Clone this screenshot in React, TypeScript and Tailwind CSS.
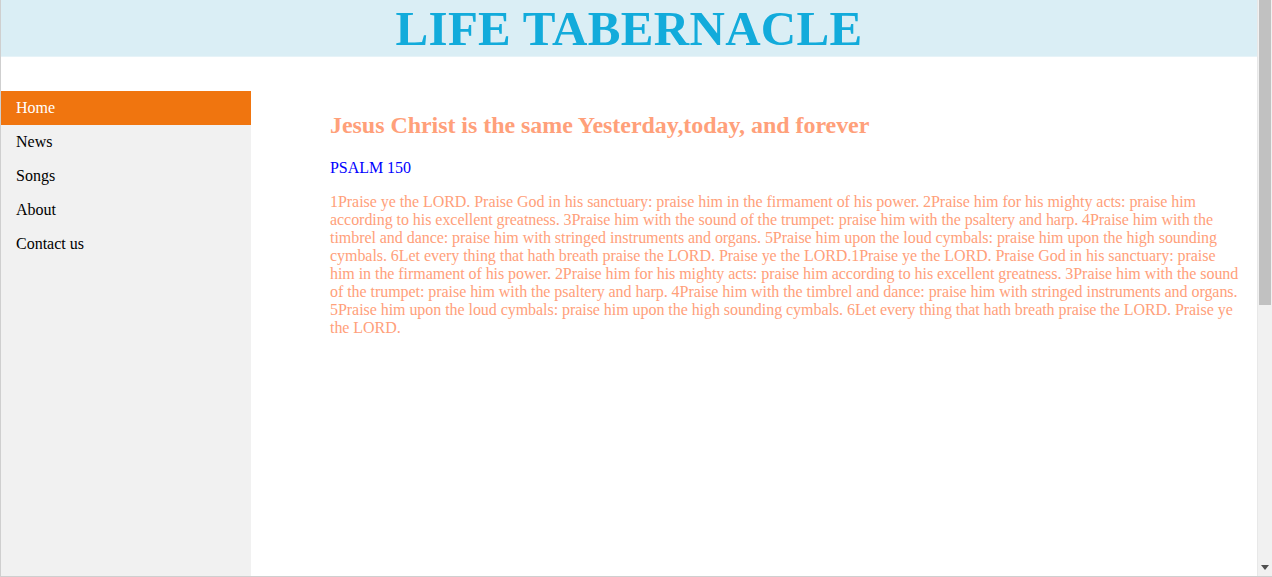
import React from 'react';

const navItems = ['Home', 'News', 'Songs', 'About', 'Contact us'];

const psalm =
  '1Praise ye the LORD. Praise God in his sanctuary: praise him in the firmament of his power. 2Praise him for his mighty acts: praise him according to his excellent greatness. 3Praise him with the sound of the trumpet: praise him with the psaltery and harp. 4Praise him with the timbrel and dance: praise him with stringed instruments and organs. 5Praise him upon the loud cymbals: praise him upon the high sounding cymbals. 6Let every thing that hath breath praise the LORD. Praise ye the LORD.1Praise ye the LORD. Praise God in his sanctuary: praise him in the firmament of his power. 2Praise him for his mighty acts: praise him according to his excellent greatness. 3Praise him with the sound of the trumpet: praise him with the psaltery and harp. 4Praise him with the timbrel and dance: praise him with stringed instruments and organs. 5Praise him upon the loud cymbals: praise him upon the high sounding cymbals. 6Let every thing that hath breath praise the LORD. Praise ye the LORD.';

const Sidebar: React.FC = () => (
  <ul className="w-[250px] shrink-0 bg-[#f1f1f1] h-full">
    {navItems.map((item, i) => (
      <li key={item}>
        <a
          href="#"
          className={`block pl-[15px] pr-4 py-2 text-base leading-[normal] ${
            i === 0 ? 'bg-[#f0750f] text-white' : 'text-black'
          }`}
        >
          {item}
        </a>
      </li>
    ))}
  </ul>
);

const App: React.FC = () => {
  return (
    <div
      className="h-[577px] w-[1272px] overflow-hidden flex bg-white border-l border-b border-[#cfcfcf]"
      style={{ fontFamily: '"Liberation Serif", "Times New Roman", serif' }}
    >
      <div className="flex-1 flex flex-col min-w-0">
        <header className="h-[57px] bg-[#daeef5] border-b border-[#e6f3f8] flex items-center justify-center">
          <h1 className="text-[49px] leading-[normal] font-bold text-[#12abdb] tracking-[0.3px]">
            LIFE TABERNACLE
          </h1>
        </header>

        <div className="flex flex-1 mt-[34px] min-h-0">
          <Sidebar />
          <main className="flex-1 ml-[63px] px-4 pt-[21px] tracking-[-0.05px]">
            <h2 className="text-2xl leading-[normal] font-bold text-[#ffa07a] mb-[20px]">
              Jesus Christ is the same Yesterday,today, and forever
            </h2>
            <p className="text-base leading-[normal] text-[#0000ff] mb-4">PSALM 150</p>
            <p className="text-base leading-[normal] text-[#ffa07a]">{psalm}</p>
          </main>
        </div>
      </div>

      {/* scrollbar */}
      <div className="w-[15px] shrink-0 bg-[#f1f1f1] border-l border-[#e8e8e8] flex flex-col">
        <div className="h-[305px] mx-[1px] bg-[#c1c1c1]" />
        <div className="flex-1" />
        <div className="h-[17px] flex items-center justify-center">
          <svg width="8" height="5" viewBox="0 0 8 5">
            <path d="M0 0h8L4 5z" fill="#505050" />
          </svg>
        </div>
      </div>
    </div>
  );
};

export default App;
